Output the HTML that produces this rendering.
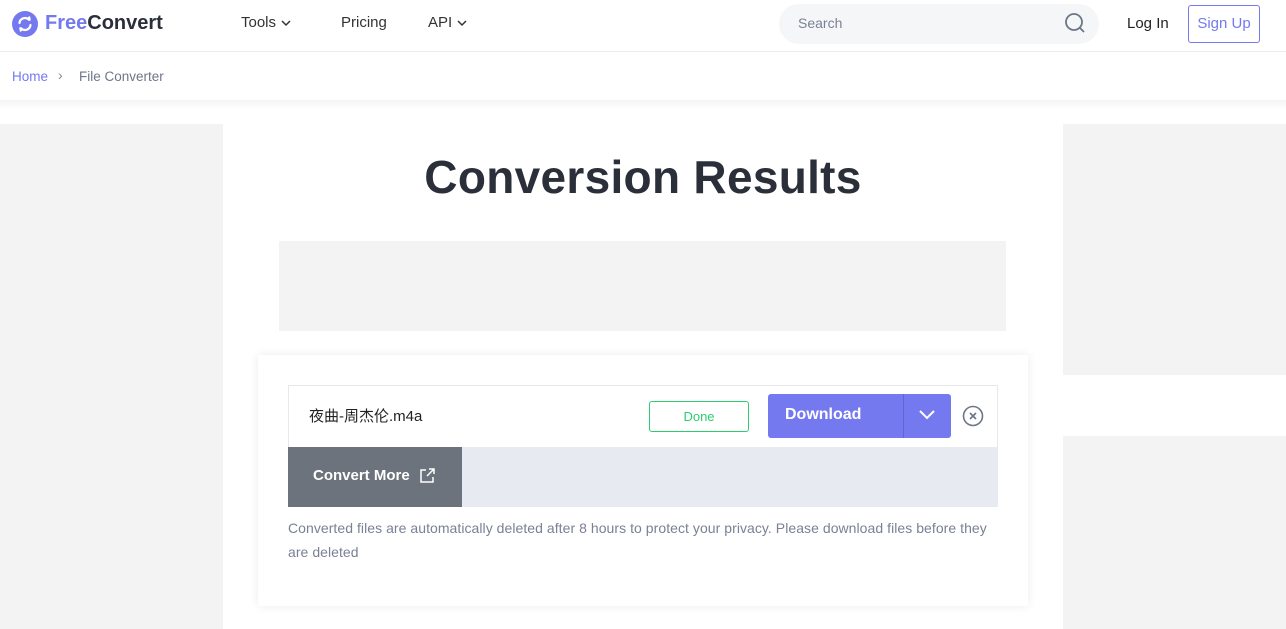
<!DOCTYPE html>
<html><head><meta charset="utf-8"><style>
*{margin:0;padding:0;box-sizing:border-box}
body{width:1286px;height:629px;overflow:hidden;background:#fff;font-family:"Liberation Sans","Noto Sans CJK SC",sans-serif;position:relative}
.a{position:absolute}
</style></head><body>
<div class="a" style="left:0;top:0;width:1286px;height:52px;border-bottom:1px solid #ececf0"></div>
<svg class="a" style="left:12px;top:11px" width="26" height="26" viewBox="0 0 26 26"><circle cx="13" cy="13" r="13" fill="#7479f0"/><path d="M7.5 12a5.5 5.5 0 0 1 9.5-3.2M18.5 14a5.5 5.5 0 0 1-9.5 3.2" stroke="#fff" stroke-width="2.2" fill="none" stroke-linecap="round"/><path d="M15.5 7.5l2.5 1.5-0.5-3zM10.5 18.5l-2.5-1.5 .5 3z" fill="#fff" stroke="#fff" stroke-width="1.5" stroke-linejoin="round"/></svg>
<div class="a" style="left:45px;top:12px;font-size:20px;font-weight:bold;color:#2a2f3a"><span style="color:#7479f0">Free</span>Convert</div>
<div class="a" style="left:241px;top:14px;font-size:15px;color:#333">Tools <svg width="12" height="8" viewBox="0 0 12 8"><path d="M2 2l4 4 4-4" stroke="#333" stroke-width="1.5" fill="none"/></svg></div>
<div class="a" style="left:341px;top:14px;font-size:15px;color:#333">Pricing</div>
<div class="a" style="left:428px;top:14px;font-size:15px;color:#333">API <svg width="12" height="8" viewBox="0 0 12 8"><path d="M2 2l4 4 4-4" stroke="#333" stroke-width="1.5" fill="none"/></svg></div>
<div class="a" style="left:779px;top:4px;width:320px;height:40px;border-radius:20px;background:#f5f6f7"></div>
<div class="a" style="left:798px;top:15px;font-size:14px;color:#7a8194">Search</div>
<svg class="a" style="left:1063px;top:11px" width="24" height="24" viewBox="0 0 24 24"><circle cx="11" cy="11" r="8" stroke="#6c7589" stroke-width="1.8" fill="none"/><path d="M17 17l4 4" stroke="#6c7589" stroke-width="1.8"/></svg>
<div class="a" style="left:1127px;top:15px;font-size:15px;color:#222">Log In</div>
<div class="a" style="left:1188px;top:5px;width:72px;height:38px;border:1px solid #7479f0;border-radius:3px;color:#7479f0;font-size:15px;text-align:center;line-height:36px">Sign Up</div>
<div class="a" style="left:12px;top:69px;font-size:13.5px;color:#7479f0">Home</div>
<div class="a" style="left:58px;top:67px;font-size:14px;color:#888">›</div>
<div class="a" style="left:79px;top:69px;font-size:13.5px;color:#6e768a">File Converter</div>
<div class="a" style="left:0;top:100px;width:1286px;height:24px;background:linear-gradient(#f4f4f4,#fff 40%)"></div>
<div class="a" style="left:0;top:124px;width:223px;height:505px;background:#f3f3f3"></div>
<div class="a" style="left:1063px;top:124px;width:223px;height:251px;background:#f3f3f3"></div>
<div class="a" style="left:1063px;top:436px;width:223px;height:193px;background:#f3f3f3"></div>
<div class="a" style="left:223px;top:150px;width:840px;text-align:center;font-size:46px;font-weight:bold;color:#2a2f3a;letter-spacing:0.3px">Conversion Results</div>
<div class="a" style="left:279px;top:241px;width:727px;height:90px;background:#f3f3f3"></div>
<div class="a" style="left:258px;top:355px;width:770px;height:251px;background:#fff;box-shadow:0 0 10px rgba(0,0,0,.08);border-radius:2px"></div>
<div class="a" style="left:288px;top:385px;width:710px;height:62px;border:1px solid #e6e8ee;border-bottom:none"></div>
<div class="a" style="left:309px;top:405px;font-size:15px;color:#222">夜曲-周杰伦.m4a</div>
<div class="a" style="left:649px;top:401px;width:100px;height:31px;border:1px solid #2ecc71;border-radius:3px;color:#2ecc71;font-size:13px;text-align:center;line-height:29px">Done</div>
<div class="a" style="left:768px;top:394px;width:183px;height:44px;background:#7479f0;border-radius:3px"></div>
<div class="a" style="left:903px;top:394px;width:1px;height:44px;background:#6066d0"></div>
<div class="a" style="left:785px;top:406px;font-size:16px;font-weight:bold;color:#fff">Download</div>
<svg class="a" style="left:918px;top:408px" width="18" height="14" viewBox="0 0 18 14"><path d="M2 3l7 7 7-7" stroke="#fff" stroke-width="2" fill="none"/></svg>
<svg class="a" style="left:962px;top:405px" width="22" height="22" viewBox="0 0 22 22"><circle cx="11" cy="11" r="9.5" stroke="#6c7589" stroke-width="1.6" fill="none"/><path d="M8 8l6 6M14 8l-6 6" stroke="#6c7589" stroke-width="1.6"/></svg>
<div class="a" style="left:288px;top:447px;width:710px;height:60px;background:#e8eaf2"></div>
<div class="a" style="left:288px;top:447px;width:174px;height:60px;background:#6c737d"></div>
<div class="a" style="left:313px;top:467px;font-size:15px;font-weight:bold;color:#fff">Convert More</div>
<svg class="a" style="left:419px;top:467px" width="17" height="17" viewBox="0 0 17 17"><path d="M7 3H2v12h12V10M10 2h5v5M15 2L8 9" stroke="#fff" stroke-width="1.5" fill="none"/></svg>
<div class="a" style="left:288px;top:516px;width:712px;font-size:14px;line-height:24px;color:#7a8194;letter-spacing:0.05px">Converted files are automatically deleted after 8 hours to protect your privacy. Please download files before they are deleted</div>
</body></html>
